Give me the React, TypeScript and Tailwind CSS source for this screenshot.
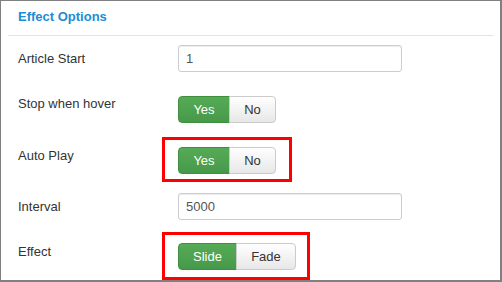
import React from 'react';

type Seg = { label: string; width: string };

function Toggle({ options, active, mark }: { options: Seg[]; active: number; mark?: string }) {
  return (
    <div className="relative inline-flex h-[27px]">
      {options.map((o, i) => {
        const on = i === active;
        const first = i === 0;
        const last = i === options.length - 1;
        return (
          <span
            key={o.label}
            className={[
              'flex h-full items-center justify-center border text-[13px] leading-none',
              o.width,
              first ? 'rounded-l-[4px]' : '-ml-px',
              last ? 'rounded-r-[4px]' : '',
              on
                ? 'border-[#3f8f3f] bg-gradient-to-b from-[#56ab56] to-[#47994a] text-white'
                : 'border-[#cbcbcb] bg-gradient-to-b from-white to-[#e7e7e7] text-[#333]',
            ].join(' ')}
          >
            {o.label}
          </span>
        );
      })}
      {mark && <span className={`pointer-events-none absolute border-[3px] border-[#ff0000] ${mark}`} />}
    </div>
  );
}

function TextInput({ value }: { value: string }) {
  return (
    <div className="flex h-[27px] w-[224px] items-center rounded-[3px] border border-[#cccccc] bg-white px-[7px] text-[13px] text-[#555] shadow-[inset_0_1px_1px_rgba(0,0,0,0.075)]">
      {value}
    </div>
  );
}

export default function App() {
  return (
    <div className="h-[282px] w-[502px] overflow-hidden border-b-2 border-l border-r-2 border-t border-[#808080] bg-white font-['Liberation_Sans',Arial,sans-serif] text-[#333]">
      {/* Header */}
      <div className="mx-[7px] h-[35px] border-b border-[#e3e3e3] pl-[10px] pt-[8px]">
        <h3 className="text-[13px] font-bold leading-[16px] text-[#1b8dd4]">Effect Options</h3>
      </div>

      <div className="pl-[17px]">
        <div className="mt-[9px] flex">
          <label className="w-[160px] text-[13px] leading-[27px]">Article Start</label>
          <TextInput value="1" />
        </div>

        <div className="mt-[24px] flex items-start">
          <label className="w-[160px] text-[13px] leading-[16px]">Stop when hover</label>
          <Toggle
            active={0}
            options={[
              { label: 'Yes', width: 'w-[52px]' },
              { label: 'No', width: 'w-[47px]' },
            ]}
          />
        </div>

        <div className="mt-[24px] flex items-start">
          <label className="w-[160px] text-[13px] leading-[17px]">Auto Play</label>
          <Toggle
            active={0}
            mark="-left-[16px] -top-[10px] -right-[16px] -bottom-[8px]"
            options={[
              { label: 'Yes', width: 'w-[52px]' },
              { label: 'No', width: 'w-[47px]' },
            ]}
          />
        </div>

        <div className="mt-[19px] flex">
          <label className="w-[160px] text-[13px] leading-[27px]">Interval</label>
          <TextInput value="5000" />
        </div>

        <div className="mt-[23px] flex items-start">
          <label className="w-[160px] text-[13px] leading-[17px]">Effect</label>
          <Toggle
            active={0}
            mark="-left-[16px] -top-[11px] -right-[14px] -bottom-[10px]"
            options={[
              { label: 'Slide', width: 'w-[59px]' },
              { label: 'Fade', width: 'w-[60px]' },
            ]}
          />
        </div>
      </div>
    </div>
  );
}
